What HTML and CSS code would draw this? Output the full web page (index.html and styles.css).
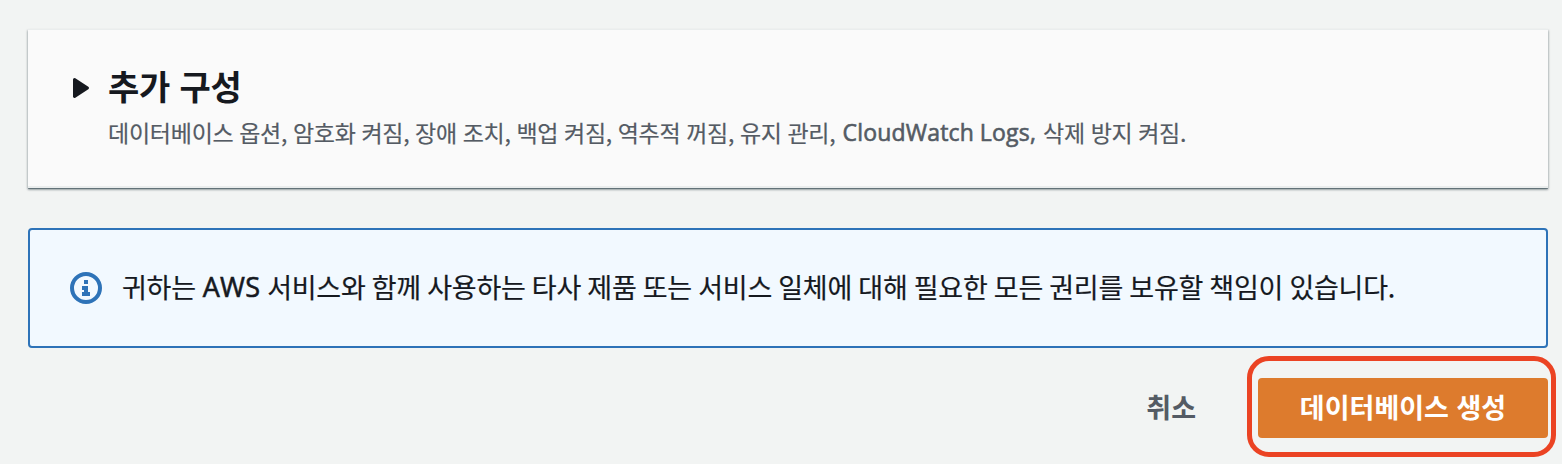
FILE: index.html
```html
<!DOCTYPE html>
<html lang="ko">
<head>
<meta charset="utf-8">
<title>데이터베이스 생성</title>
<link rel="stylesheet" href="styles.css">
</head>
<body>
<main class="page">
  <section class="panel">
    <svg class="caret" viewBox="0 0 18 22"><path d="M2.5 2.5 15.5 11 2.5 19.5z"/></svg>
    <div class="panel-body">
      <h2 class="title">추가 구성</h2>
      <p class="desc"><span>데이터베이스 옵션, 암호화 켜짐, 장애 조치, 백업 켜짐, 역추적 꺼짐, 유지 관리,</span><span class="latin">CloudWatch Logs,</span><span>삭제 방지 켜짐.</span></p>
    </div>
  </section>
  <section class="alert">
    <svg class="info" viewBox="0 0 32 32"><circle cx="16" cy="16" r="14"/><path d="M14 8h4v4h-4zM12 14h6v6h2v4h-8v-4h2v-2h-2z"/></svg>
    <p class="message"><span>귀하는</span><span class="latin">AWS</span><span>서비스와 함께 사용하는 타사 제품 또는 서비스 일체에 대해 필요한 모든 권리를 보유할 책임이 있습니다.</span></p>
  </section>
  <footer class="actions">
    <button class="cancel">취소</button>
    <div class="highlight"><button class="create">데이터베이스 생성</button></div>
  </footer>
</main>
</body>
</html>
```
FILE: styles.css
```css
* { box-sizing: border-box; }
body { margin: 0; background: #f2f4f3; color: #16191f; font-family: "Noto Sans CJK KR", sans-serif; }
h2, p { margin: 0; white-space: nowrap; }
button { border: 0; padding: 0; background: none; font: inherit; white-space: nowrap; }
.page { height: 464px; padding: 29px 6px 0 28px; overflow: hidden; }
.panel { display: flex; width: 1520px; height: 159px; padding: 36px 0 0 44px; background: #fafafa; border-top: 1px solid #eaeded; border-bottom: 2px solid #eaeded; box-shadow: 0 1px 0 rgba(0,28,36,.3), 0 2px 2px rgba(0,28,36,.3), 1px 1px 2px rgba(0,28,36,.15), -1px 1px 2px rgba(0,28,36,.15); }
.caret { width: 18px; height: 22px; margin: 11px 18px 0 0; fill: #16191f; stroke: #16191f; stroke-width: 3; stroke-linejoin: round; }
.title { height: 45px; font-size: 34px; line-height: 40px; font-weight: 700; letter-spacing: -.2px; }
.desc { display: flex; gap: 7px; font-size: 23px; line-height: 42px; color: #545b64; letter-spacing: -.25px; word-spacing: -.45px; -webkit-text-stroke: .2px currentColor; }
.latin { font-family: "Open Sans", sans-serif; -webkit-text-stroke: .6px currentColor; letter-spacing: .2px; }
.alert { display: flex; align-items: center; width: 1520px; height: 120px; margin-top: 40px; padding-left: 40px; background: #f2f9ff; border: 2px solid #2e73b8; border-radius: 4px; }
.info { width: 32px; height: 32px; margin-right: 20px; fill: #2e73b8; }
.info circle { fill: none; stroke: #2e73b8; stroke-width: 4; }
.message { display: flex; gap: 7px; padding-bottom: 2px; font-size: 27px; line-height: 40px; letter-spacing: -.26px; word-spacing: -1px; -webkit-text-stroke: .2px currentColor; }
.actions { display: flex; justify-content: flex-end; align-items: center; height: 101px; margin-top: 8px; gap: 51px; }
.cancel { padding-bottom: 1px; font-size: 27px; font-weight: 700; color: #545b64; }
.highlight { display: flex; align-items: flex-end; justify-content: flex-end; width: 309px; height: 101px; padding: 0 3px 14px 0; border: 5px solid #eb4323; border-radius: 22px; }
.create { width: 290px; height: 60px; padding-bottom: 3px; border-radius: 4px; background: #dd7b2d; color: #fff; font-size: 27px; font-weight: 700; }
```
